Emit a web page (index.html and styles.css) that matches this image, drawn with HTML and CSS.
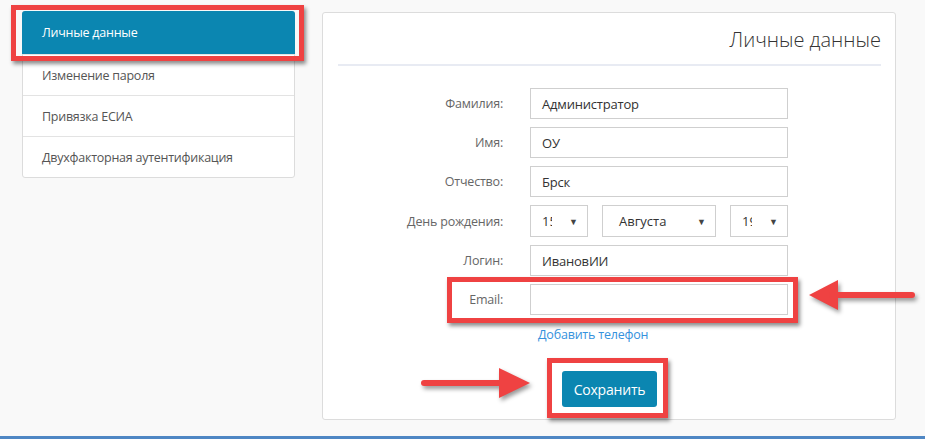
FILE: index.html
```html
<!DOCTYPE html>
<html lang="ru">
<head>
    <meta charset="UTF-8">
    <meta name="viewport" content="width=device-width, initial-scale=1.0">
    <title>Личные данные</title>
    <link rel="stylesheet" href="styles.css">
</head>
<body>
    <div class="page">
        <!-- Side menu -->
        <div class="side-menu">
            <div class="menu-item active marked">Личные данные</div>
            <div class="menu-item">Изменение пароля</div>
            <div class="menu-item">Привязка ЕСИА</div>
            <div class="menu-item">Двухфакторная аутентификация</div>
        </div>

        <!-- Profile form -->
        <div class="panel">
            <h2 class="panel-title">Личные данные</h2>
            <div class="form">
                <label class="form-label">Фамилия:</label>
                <div class="input">Администратор</div>

                <label class="form-label">Имя:</label>
                <div class="input">ОУ</div>

                <label class="form-label">Отчество:</label>
                <div class="input">Брск</div>

                <label class="form-label">День рождения:</label>
                <div class="date-row">
                    <div class="select small"><span class="clip">15</span><span class="caret">&#9660;</span></div>
                    <div class="select wide"><span>Августа</span><span class="caret">&#9660;</span></div>
                    <div class="select small"><span class="clip">1990</span><span class="caret">&#9660;</span></div>
                </div>

                <label class="form-label">Логин:</label>
                <div class="input">ИвановИИ</div>

                <div class="email-row">
                    <label class="form-label">Email:</label>
                    <div class="input"></div>
                </div>

                <div></div>
                <a class="add-phone" href="#">Добавить телефон</a>
            </div>
            <div class="actions">
                <button class="save-button">Сохранить</button>
            </div>
        </div>

        <!-- Annotation arrows -->
        <svg class="arrow arrow-right" viewBox="0 0 115 36" xmlns="http://www.w3.org/2000/svg">
            <line x1="5" y1="18" x2="88" y2="18" stroke="#ef4242" stroke-width="6" stroke-linecap="round" />
            <polygon points="80,3 111,18 80,33" fill="#ef4242" />
        </svg>
        <svg class="arrow arrow-left" viewBox="0 0 112 36" xmlns="http://www.w3.org/2000/svg">
            <polygon points="3,18 32,3 32,33" fill="#ef4242" />
            <line x1="26" y1="18" x2="106" y2="18" stroke="#ef4242" stroke-width="6" stroke-linecap="round" />
        </svg>
    </div>
    <div class="bottom-line"></div>
</body>
</html>
```

FILE: styles.css
```css
body {
    margin: 0;
    background-color: #f9f9f9;
    color: #333;
    font-family: "Open Sans", Arial, sans-serif;
    overflow: hidden;
}

.page {
    position: relative;
    display: flex;
    align-items: flex-start;
    gap: 27px;
    height: 436px;
    padding: 11px 0 0 22px;
    box-sizing: border-box;
}

/* Side menu */
.side-menu {
    width: 273px;
    background: #fff;
    border: 1px solid #dcdcdc;
    border-radius: 3px;
    box-sizing: border-box;
}

.menu-item {
    height: 41px;
    box-sizing: border-box;
    padding-left: 19px;
    display: flex;
    align-items: center;
    font-size: 12.5px;
    color: #555;
    border-top: 1px solid #e3e3e3;
    letter-spacing: -0.25px;
}

.menu-item.active {
    height: 43px;
    margin: -1px -1px 0;
    padding-left: 20px;
    background-color: #0b86b1;
    color: #fff;
    border-top: none;
    border-radius: 3px 3px 0 0;
}

/* Red annotation frames */
.marked {
    position: relative;
}

.marked::after {
    content: "";
    position: absolute;
    border: 5px solid #ef4242;
    box-shadow: 2px 3px 4px rgba(0, 0, 0, 0.45);
    pointer-events: none;
}

.menu-item.marked::after {
    top: -6px;
    bottom: -7px;
    left: -11px;
    right: -9px;
}

/* Panel */
.panel {
    width: 574px;
    height: 408px;
    margin-top: 1px;
    background: #fff;
    border: 1px solid #dcdcdc;
    border-radius: 3px;
    padding: 13px 14px 0 15px;
    box-sizing: border-box;
}

.panel-title {
    margin: 0;
    padding-bottom: 10px;
    border-bottom: 2px solid #e8ebf3;
    text-align: right;
    font-size: 20px;
    font-weight: 300;
    line-height: 28px;
    color: #333;
}

.form {
    display: grid;
    grid-template-columns: 165px 258px;
    column-gap: 27px;
    row-gap: 8px;
    align-items: center;
    margin-top: 22px;
}

.form-label {
    text-align: right;
    font-size: 12.5px;
    color: #666;
    letter-spacing: -0.2px;
}

.input {
    height: 31px;
    border: 1px solid #cfcfcf;
    box-sizing: border-box;
    padding-left: 11px;
    display: flex;
    align-items: center;
    font-size: 13px;
    color: #333;
    letter-spacing: -0.2px;
}

.date-row {
    display: flex;
    justify-content: space-between;
}

.select {
    height: 32px;
    border: 1px solid #cfcfcf;
    box-sizing: border-box;
    padding: 0 9px 0 11px;
    display: flex;
    align-items: center;
    justify-content: space-between;
    font-size: 13px;
    color: #333;
}

.select.small {
    width: 58px;
}

.select.wide {
    width: 114px;
    padding-left: 16px;
}

.clip {
    width: 10px;
    overflow: hidden;
    white-space: nowrap;
}

.caret {
    font-size: 9px;
    color: #444;
}

.email-row {
    position: relative;
    grid-column: 1 / 3;
    display: grid;
    grid-template-columns: 165px 258px;
    column-gap: 27px;
    align-items: center;
}

.email-row::after {
    content: "";
    position: absolute;
    top: -7px;
    bottom: -8px;
    left: 109px;
    right: -10px;
    border: 5px solid #ef4242;
    box-shadow: 2px 3px 4px rgba(0, 0, 0, 0.45);
}

.add-phone {
    margin-top: 3px;
    padding-left: 8px;
    font-size: 12.5px;
    color: #3592dd;
    text-decoration: none;
    letter-spacing: -0.2px;
}

.actions {
    display: flex;
    justify-content: center;
    margin-top: 28px;
}

.save-button {
    position: relative;
    width: 95px;
    height: 36px;
    background-color: #0b86b1;
    color: #fff;
    border: none;
    border-radius: 3px;
    font-family: inherit;
    font-size: 14px;
    letter-spacing: -0.2px;
}

.save-button::after {
    content: "";
    position: absolute;
    top: -13px;
    bottom: -11px;
    left: -15px;
    right: -11px;
    border: 5px solid #ef4242;
    box-shadow: 2px 3px 4px rgba(0, 0, 0, 0.45);
}

/* Arrows */
.arrow {
    position: absolute;
    filter: drop-shadow(2px 3px 2px rgba(0, 0, 0, 0.4));
}

.arrow-right {
    left: 419px;
    top: 365px;
    width: 115px;
    height: 36px;
}

.arrow-left {
    left: 806px;
    top: 277px;
    width: 112px;
    height: 36px;
}

.bottom-line {
    height: 3px;
    background-color: #4f87c4;
}
```
